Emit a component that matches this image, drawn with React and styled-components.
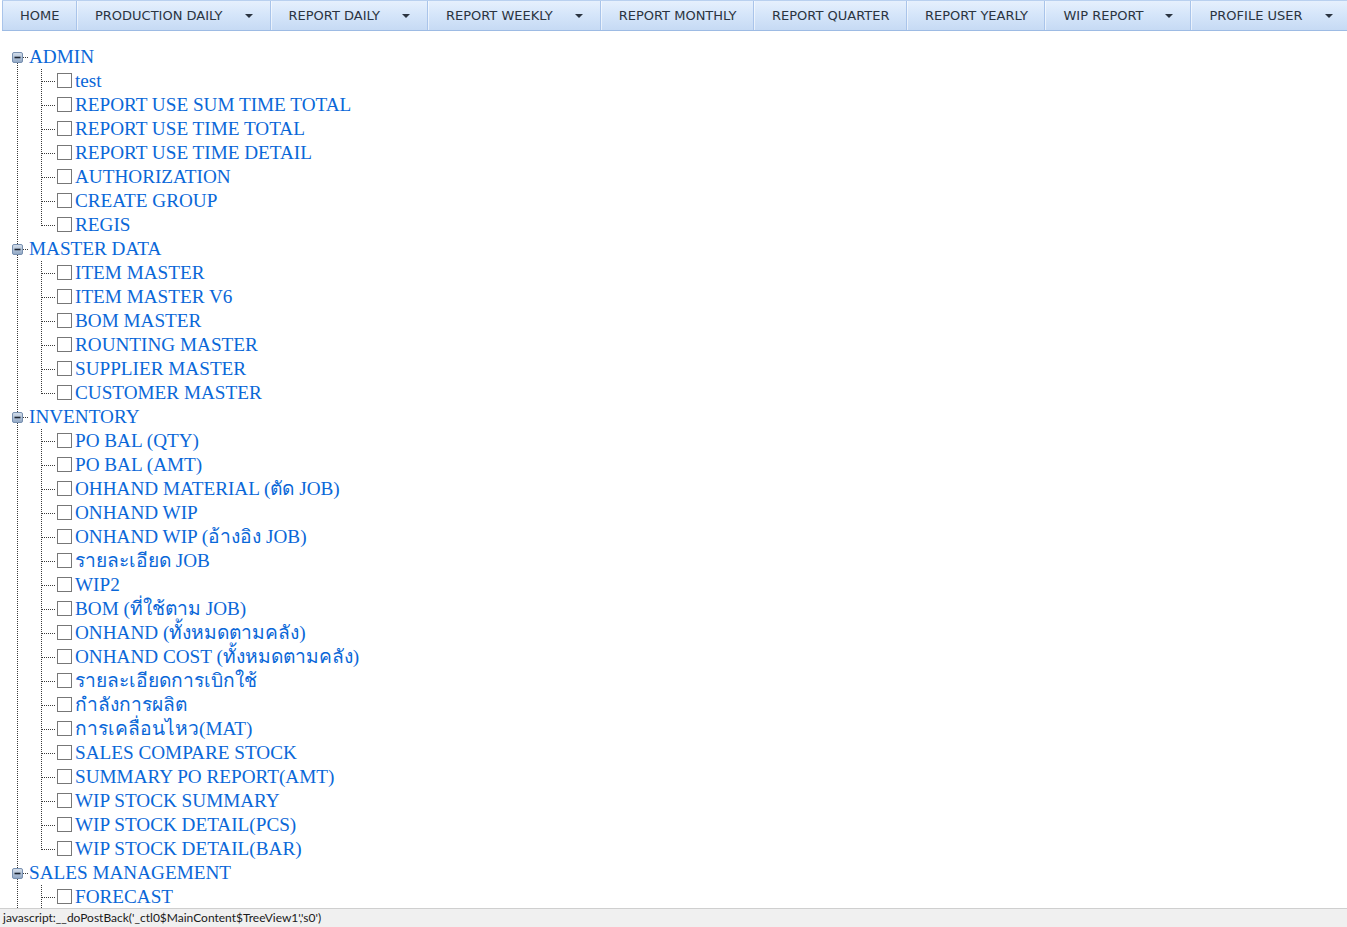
import React from 'react';
import styled, { createGlobalStyle } from 'styled-components';

const GlobalStyle = createGlobalStyle`
  html, body {
    margin: 0;
    padding: 0;
    background: #fff;
  }
  body {
    font-family: "Liberation Serif", serif;
    overflow: hidden;
  }
`;

const menuItems = [
  { label: 'HOME' },
  { label: 'PRODUCTION DAILY', drop: true },
  { label: 'REPORT DAILY', drop: true },
  { label: 'REPORT WEEKLY', drop: true },
  { label: 'REPORT MONTHLY' },
  { label: 'REPORT QUARTER' },
  { label: 'REPORT YEARLY' },
  { label: 'WIP REPORT', drop: true },
  { label: 'PROFILE USER', drop: true },
];

// the list runs on below the status bar; `more` keeps the tree lines going
const tree = [
  {
    label: 'ADMIN',
    children: [
      'test',
      'REPORT USE SUM TIME TOTAL',
      'REPORT USE TIME TOTAL',
      'REPORT USE TIME DETAIL',
      'AUTHORIZATION',
      'CREATE GROUP',
      'REGIS',
    ],
  },
  {
    label: 'MASTER DATA',
    children: [
      'ITEM MASTER',
      'ITEM MASTER V6',
      'BOM MASTER',
      'ROUNTING MASTER',
      'SUPPLIER MASTER',
      'CUSTOMER MASTER',
    ],
  },
  {
    label: 'INVENTORY',
    children: [
      'PO BAL (QTY)',
      'PO BAL (AMT)',
      'OHHAND MATERIAL (ตัด JOB)',
      'ONHAND WIP',
      'ONHAND WIP (อ้างอิง JOB)',
      'รายละเอียด JOB',
      'WIP2',
      'BOM (ที่ใช้ตาม JOB)',
      'ONHAND (ทั้งหมดตามคลัง)',
      'ONHAND COST (ทั้งหมดตามคลัง)',
      'รายละเอียดการเบิกใช้',
      'กำลังการผลิต',
      'การเคลื่อนไหว(MAT)',
      'SALES COMPARE STOCK',
      'SUMMARY PO REPORT(AMT)',
      'WIP STOCK SUMMARY',
      'WIP STOCK DETAIL(PCS)',
      'WIP STOCK DETAIL(BAR)',
    ],
  },
  {
    label: 'SALES MANAGEMENT',
    children: ['FORECAST'],
    more: true,
  },
];

const Page = styled.div`
  display: flex;
  flex-direction: column;
  height: 100vh;
  overflow: hidden;
`;

const MenuBar = styled.nav`
  flex: none;
  display: flex;
  height: 29px;
  margin-left: 2px;
  border-top: 1px solid #b9d0ef;
  border-bottom: 1px solid #9dbbe4;
  background: linear-gradient(to bottom, #e6f0fd 0%, #d6e6fa 45%, #c6daf4 100%);
  font-family: "DejaVu Sans", Verdana, sans-serif;
  font-size: 13px;
  color: #2b3441;
  white-space: nowrap;
`;

const MenuItem = styled.div`
  display: flex;
  align-items: center;
  flex: none;
  padding: 0 ${(p) => (p.$drop ? '17px' : '16.5px')} 0 17px;
  border-left: 1px solid #ffffff90;
  border-right: 1px solid #a9c4ea;
  &:first-child {
    border-left: 1px solid #a9c4ea;
  }
`;

const Caret = styled.span`
  width: 0;
  height: 0;
  margin-left: ${(p) => p.$gap}px;
  border-left: 4px solid transparent;
  border-right: 4px solid transparent;
  border-top: 4px solid #2b3441;
`;

const Tree = styled.div`
  flex: 1;
  min-height: 0;
  overflow: hidden;
  padding: 14px 0 0 8px;
  font-size: 19.2px;
  line-height: 24px;
  color: #0a67d8;
`;

const Row = styled.div`
  display: flex;
  align-items: center;
  height: 24px;
  white-space: nowrap;
`;

const Connector = styled.svg`
  display: block;
  flex: none;
`;

const Check = styled.span`
  flex: none;
  width: 13px;
  height: 13px;
  margin: -2px 3px 0 1px;
  border: 1px solid #777;
  background: #fff;
`;

const NodeText = styled.a`
  color: inherit;
  text-decoration: none;
  cursor: pointer;
`;

const StatusBar = styled.div`
  flex: none;
  height: 18px;
  padding-left: 3px;
  border-top: 1px solid #cfcfcf;
  background: #f0f0f0;
  font-family: Lato, "Open Sans", sans-serif;
  font-size: 12px;
  line-height: 17px;
  color: #1a1a1a;
  white-space: nowrap;
`;

const dots = '1 1';
const lineColor = '#3a3a3a';

function RootLines({ first, last }) {
  return (
    <Connector width="21" height="24" viewBox="0 0 21 24">
      <defs>
        <linearGradient id="mi" x1="0" y1="0" x2="0" y2="1">
          <stop offset="0" stopColor="#d6e0ec" />
          <stop offset="1" stopColor="#8ea5c3" />
        </linearGradient>
      </defs>
      <line
        x1="9.5"
        y1={first ? 12 : 0}
        x2="9.5"
        y2={last ? 12 : 24}
        stroke={lineColor}
        strokeDasharray={dots}
      />
      <line x1="15" y1="12.5" x2="21" y2="12.5" stroke={lineColor} strokeDasharray={dots} />
      <rect x="4.5" y="7.5" width="10" height="10" rx="1.5" fill="url(#mi)" stroke="#7890b0" />
      <line x1="6.5" y1="12.5" x2="12.5" y2="12.5" stroke="#1c2430" strokeWidth="1.6" />
    </Connector>
  );
}

function ChildLines({ rootLast, last }) {
  return (
    <Connector width="48" height="24" viewBox="0 0 48 24">
      {!rootLast && (
        <line x1="9.5" y1="0" x2="9.5" y2="24" stroke={lineColor} strokeDasharray={dots} />
      )}
      <line
        x1="33.5"
        y1="0"
        x2="33.5"
        y2={last ? 13 : 24}
        stroke={lineColor}
        strokeDasharray={dots}
      />
      <line x1="34" y1="12.5" x2="48" y2="12.5" stroke={lineColor} strokeDasharray={dots} />
    </Connector>
  );
}

export default function App() {
  return (
    <Page>
      <GlobalStyle />
      <MenuBar>
        {menuItems.map((m) => (
          <MenuItem key={m.label} $drop={m.drop}>
            {m.label}
            {m.drop && <Caret $gap={22} />}
          </MenuItem>
        ))}
      </MenuBar>

      <Tree>
        {tree.map((node, i) => {
          const rootLast = i === tree.length - 1 && !node.more;
          return (
            <React.Fragment key={node.label}>
              <Row>
                <RootLines first={i === 0} last={rootLast} />
                <NodeText>{node.label}</NodeText>
              </Row>
              {node.children.map((c, j) => (
                <Row key={c}>
                  <ChildLines
                    rootLast={rootLast}
                    last={j === node.children.length - 1 && !node.more}
                  />
                  <Check />
                  <NodeText>{c}</NodeText>
                </Row>
              ))}
            </React.Fragment>
          );
        })}
      </Tree>

      <StatusBar>javascript:__doPostBack('_ctl0$MainContent$TreeView1','s0')</StatusBar>
    </Page>
  );
}
